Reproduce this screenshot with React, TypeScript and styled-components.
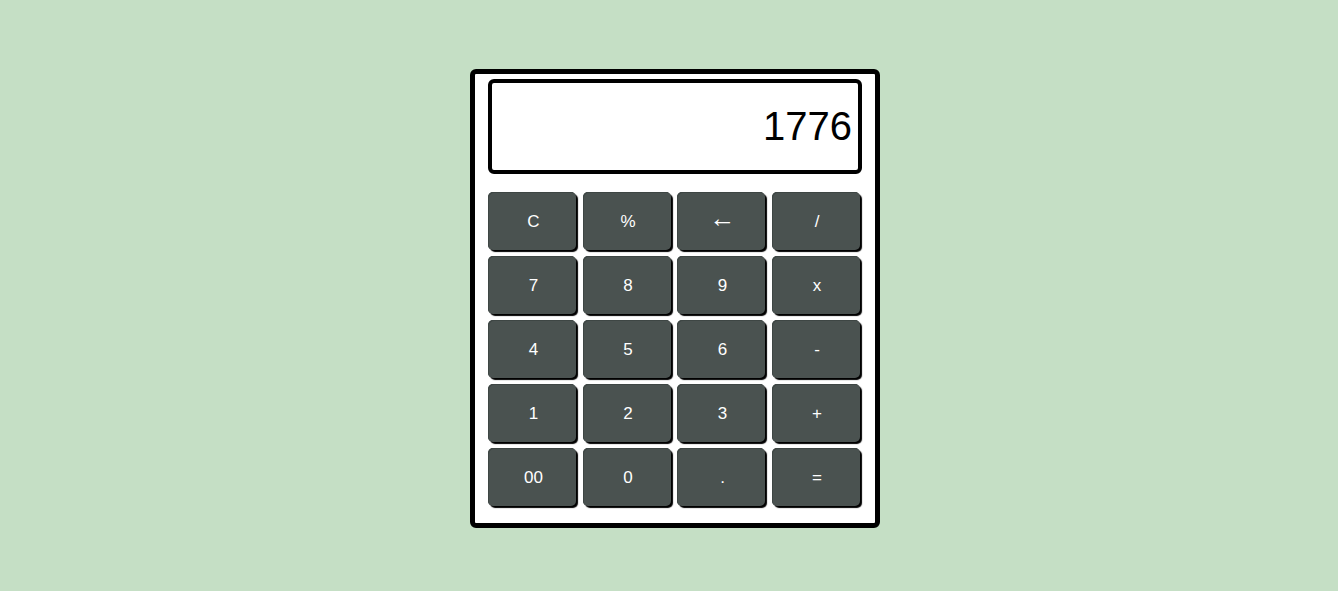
import React from "react";
import styled, { createGlobalStyle } from "styled-components";

const Global = createGlobalStyle`
  html, body { margin: 0; padding: 0; background: #c5dfc5; }
  body { font-family: "Liberation Sans", Arial, sans-serif; }
`;

const Page = styled.div`
  min-height: 591px;
  display: flex;
  justify-content: center;
  align-items: flex-start;
  padding: 69px 0 0 12px;
  box-sizing: border-box;
`;

const Calculator = styled.div`
  width: 410px;
  box-sizing: border-box;
  background: #ffffff;
  border: 5px solid #000000;
  border-radius: 6px;
  padding: 5px 13px 17px 13px;
  display: flex;
  flex-direction: column;
  gap: 18px;
`;

const Display = styled.div`
  height: 95px;
  box-sizing: border-box;
  border: 4px solid #000000;
  border-radius: 6px;
  background: #ffffff;
  display: flex;
  align-items: center;
  justify-content: flex-end;
  padding-right: 6px;
  font-size: 40px;
  color: #000000;
`;

const Keys = styled.div`
  display: grid;
  grid-template-columns: repeat(4, 88px);
  grid-auto-rows: 58px;
  column-gap: 6.5px;
  row-gap: 6px;
`;

const Key = styled.button<{ $big?: boolean }>`
  border: none;
  border-radius: 5px;
  background: #4a5250;
  color: #ffffff;
  font-family: "Liberation Sans", Arial, sans-serif;
  font-size: ${(p) => (p.$big ? "26px" : "17px")};
  line-height: 1;
  box-shadow: 2px 2px 1px #000000, inset 1px 1px 0 #3e4644;
  padding: ${(p) => (p.$big ? "0 0 6px 3px" : "1px 0 0 3px")};
  cursor: pointer;
`;

const keys = [
  "C", "%", "←", "/",
  "7", "8", "9", "x",
  "4", "5", "6", "-",
  "1", "2", "3", "+",
  "00", "0", ".", "=",
];

export default function App() {
  return (
    <>
      <Global />
      <Page>
        <Calculator>
          <Display>1776</Display>
          <Keys>
            {keys.map((k) => (
              <Key key={k} $big={k === "←"}>
                {k}
              </Key>
            ))}
          </Keys>
        </Calculator>
      </Page>
    </>
  );
}
